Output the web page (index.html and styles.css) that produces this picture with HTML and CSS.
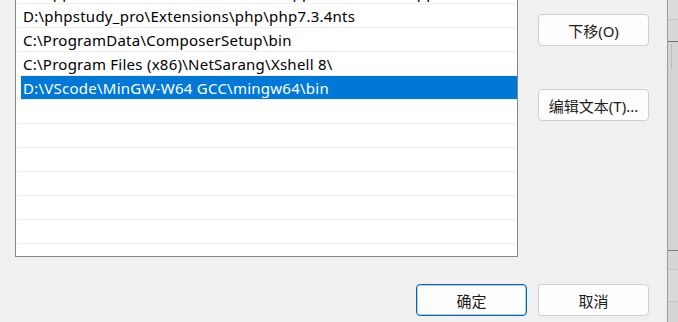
FILE: index.html
```html
<!DOCTYPE html>
<html lang="zh-CN">
<head>
    <meta charset="UTF-8">
    <meta name="viewport" content="width=device-width, initial-scale=1.0">
    <title>编辑环境变量</title>
    <link rel="stylesheet" href="styles.css">
</head>
<body>
    <div class="page">
        <!-- Dialog -->
        <div class="dialog">
            <div class="dialog-body">
                <div class="path-list">
                    <div class="path-row"><span class="path-text">C:\App\Local\Bin\Tools\Web Studio\Apps\Old Studio\Apps</span></div>
                    <div class="path-row"><span class="path-text">D:\phpstudy_pro\Extensions\php\php7.3.4nts</span></div>
                    <div class="path-row"><span class="path-text">C:\ProgramData\ComposerSetup\bin</span></div>
                    <div class="path-row"><span class="path-text">C:\Program Files (x86)\NetSarang\Xshell 8\</span></div>
                    <div class="path-row selected"><span class="path-text">D:\VScode\MinGW-W64 GCC\mingw64\bin</span></div>
                    <div class="path-row"></div>
                    <div class="path-row"></div>
                    <div class="path-row"></div>
                    <div class="path-row"></div>
                    <div class="path-row"></div>
                    <div class="path-row"></div>
                </div>
                <div class="side-buttons">
                    <button class="btn">下移(O)</button>
                    <button class="btn">编辑文本(T)...</button>
                </div>
            </div>
            <div class="dialog-footer">
                <button class="btn default">确定</button>
                <button class="btn">取消</button>
            </div>
        </div>

        <!-- Edge of the window behind -->
        <div class="back-window">
            <div class="bw-cell bw-head"></div>
            <div class="bw-cell bw-head2"></div>
            <div class="bw-scroll">
                <div class="bw-thumb"></div>
            </div>
            <div class="bw-cell bw-row"></div>
            <div class="bw-cell bw-row2"></div>
            <div class="bw-rest"></div>
        </div>
    </div>
</body>
</html>
```

FILE: styles.css
```css
body {
    margin: 0;
    padding: 0;
    background: #f0f0f0;
    font-family: "Noto Sans", "Noto Sans CJK SC", sans-serif;
    color: #000;
    overflow: hidden;
}

.page {
    display: flex;
    height: 322px;
}

.dialog {
    width: 667px;
    margin-top: -21px;
    display: flex;
    flex-direction: column;
}

.dialog-body {
    display: flex;
    gap: 20px;
    padding-left: 15px;
}

.path-list {
    width: 503px;
    height: 278px;
    box-sizing: border-box;
    border: 1px solid #868686;
    background: #fff;
    overflow: hidden;
}

.path-row {
    height: 23px;
    margin-left: 1px;
    border-bottom: 1px solid #efefef;
    display: flex;
}

.path-text {
    flex: 1;
    margin-left: 4px;
    padding-left: 2px;
    font-size: 15px;
    letter-spacing: 0.25px;
    line-height: 24px;
    white-space: nowrap;
    color: #000;
}

.path-row.selected .path-text {
    background: #0078d7;
    color: #fff;
}

.side-buttons {
    display: flex;
    flex-direction: column;
    gap: 43px;
    padding-top: 35px;
}

.btn {
    width: 111px;
    height: 32px;
    box-sizing: border-box;
    background: #fdfdfd;
    border: 1px solid #d0d0d0;
    border-radius: 4px;
    font-family: "Noto Sans", "Noto Sans CJK SC", sans-serif;
    font-size: 15px;
    color: #1b1b1b;
    padding: 0;
    cursor: pointer;
}

.btn.default {
    border-color: #0067c0;
    box-shadow: inset 0 0 0 1px rgba(0, 103, 192, 0.3);
}

.dialog-footer {
    display: flex;
    justify-content: flex-end;
    gap: 11px;
    margin-top: 27px;
    padding-right: 18px;
}

/* window behind, right edge */
.back-window {
    flex: 1;
    display: flex;
    flex-direction: column;
    border-left: 1px solid #9a9a9a;
    background: #dadada;
}

.bw-cell {
    border-bottom: 1px solid #c4c4c4;
}

.bw-head {
    height: 19px;
    background: #dcdcdc;
}

.bw-head2 {
    height: 21px;
    background: #d8d8d8;
    border-bottom-color: #707070;
}

.bw-scroll {
    height: 206px;
    background: #d4d4d4;
    border-bottom: 1px solid #7a7a7a;
    padding: 2px 0 0 3px;
}

.bw-thumb {
    width: 1px;
    height: 25px;
    background: #bdbdbd;
}

.bw-row {
    height: 18px;
    background: #d6d6d6;
}

.bw-row2 {
    height: 31px;
    background: #d9d9d9;
}

.bw-rest {
    flex: 1;
    background: #d6d6d6;
}
```
